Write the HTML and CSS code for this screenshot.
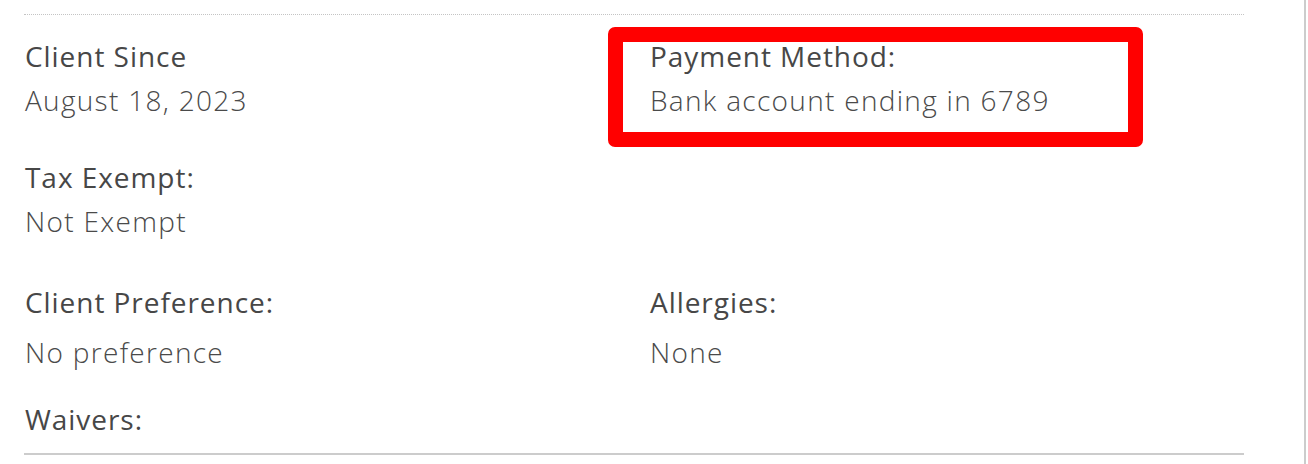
FILE: index.html
```html
<!DOCTYPE html>
<html>
<head>
<meta charset="utf-8">
<link rel="stylesheet" href="styles.css">
</head>
<body>
<div class="page">
  <div class="panel">
    <div class="details">
      <div class="field row1">
        <div class="label">Client Since</div>
        <div class="value">August 18, 2023</div>
      </div>
      <div class="field row1 col2">
        <div class="label">Payment Method:</div>
        <div class="value">Bank account ending in 6789</div>
        <div class="highlight"></div>
      </div>
      <div class="field row2">
        <div class="label">Tax Exempt:</div>
        <div class="value">Not Exempt</div>
      </div>
      <div class="field row2 col2"></div>
      <div class="field row3">
        <div class="label">Client Preference:</div>
        <div class="value">No preference</div>
      </div>
      <div class="field row3 col2">
        <div class="label">Allergies:</div>
        <div class="value">None</div>
      </div>
      <div class="field row4">
        <div class="label">Waivers:</div>
      </div>
    </div>
  </div>
</div>
</body>
</html>
```

FILE: styles.css
```css
html, body {
  margin: 0;
  padding: 0;
  background: #ffffff;
}

.page {
  width: 1304px;
  height: 464px;
  border-right: 2px solid #cccccc;
  box-sizing: content-box;
  font-family: "Open Sans", "Lato", sans-serif;
  color: #4a4a4a;
}

.panel {
  padding: 14px 60px 0 24px;
}

.details {
  border-top: 1px dotted #c4c4c4;
  border-bottom: 2px solid #cccccc;
  display: grid;
  grid-template-columns: 625px 1fr;
  padding-top: 19px;
  padding-bottom: 12px;
}

.field {
  position: relative;
  padding-left: 1px;
}

.label {
  font-size: 28px;
  line-height: 44px;
  letter-spacing: 0.95px;
  font-weight: 500;
  color: #474747;
}

.value {
  font-size: 28px;
  line-height: 44px;
  letter-spacing: 1.3px;
  font-weight: 300;
  color: #4a4a4a;
}

.row2 {
  margin-top: 33px;
}

.row3 {
  margin-top: 37px;
}

.row3 .value {
  margin-top: 6px;
}

.row4 {
  margin-top: 23px;
}

.highlight {
  position: absolute;
  left: -41px;
  top: -7px;
  width: 535px;
  height: 120px;
  box-sizing: border-box;
  border: 15px solid #ff0000;
  border-radius: 7px;
}
```
